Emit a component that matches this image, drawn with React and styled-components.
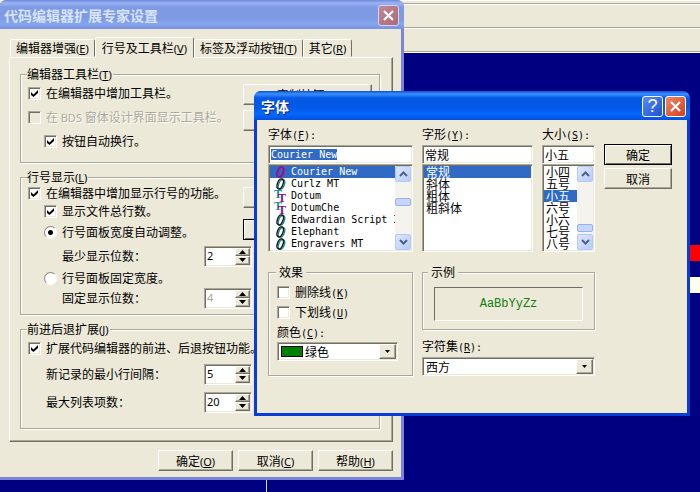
import React, { useEffect, useRef, useState } from "react";
import styled, { createGlobalStyle, css } from "styled-components";

const fonts = [
  { name: "Courier New", type: "O" },
  { name: "Curlz MT", type: "O" },
  { name: "Dotum", type: "T" },
  { name: "DotumChe", type: "T" },
  { name: "Edwardian Script I", type: "O" },
  { name: "Elephant", type: "O" },
  { name: "Engravers MT", type: "O" },
];
const styles = ["常规", "斜体", "粗体", "粗斜体"];
const sizes = ["小四", "五号", "小五", "六号", "小六", "七号", "八号"];
const tabs = [
  ["编辑器增强", "E"],
  ["行号及工具栏", "V"],
  ["标签及浮动按钮", "T"],
  ["其它", "R"],
];

// caption followed by its underlined access key
function Caption({ text, hot }) {
  return (
    <span>
      {text}
      <Latin>
        (<u>{hot}</u>)
      </Latin>
    </span>
  );
}

function MonoCaption({ text, hot, colon }) {
  return (
    <span>
      {text}
      <Mono>
        (<u>{hot}</u>){colon && ":"}
      </Mono>
    </span>
  );
}

function Check({ indent, disabled, checked, children }) {
  return (
    <CheckLabel $indent={indent} $disabled={disabled}>
      <CheckBox type="checkbox" defaultChecked={checked} disabled={disabled} />
      <span>{children}</span>
    </CheckLabel>
  );
}

function Spin({ id, label, value, indent, disabled }) {
  return (
    <>
      <SpinLabel htmlFor={id} $indent={indent}>
        {label}
      </SpinLabel>
      <SpinBox>
        <SpinInput id={id} defaultValue={value} disabled={disabled} />
        <SpinButtons>
          <SpinButton type="button" aria-label="增加">
            <svg width="7" height="4">
              <path d="M0 4L3.5 0L7 4Z" />
            </svg>
          </SpinButton>
          <SpinButton type="button" aria-label="减少">
            <svg width="7" height="4">
              <path d="M0 0L3.5 4L7 0Z" />
            </svg>
          </SpinButton>
        </SpinButtons>
      </SpinBox>
    </>
  );
}

function FontIcon({ type, active }) {
  const main = type === "T" || active ? "#84108c" : "#101818";
  return (
    <FontSvg width="13" height="12" viewBox="0 0 13 12" aria-hidden="true">
      {type === "T" ? (
        <g fontFamily="Liberation Serif" fontWeight="bold" fontSize="12">
          <text x="0" y="8" fill="#189090">
            T
          </text>
          <text x="4" y="12" fill={main}>
            T
          </text>
        </g>
      ) : (
        <g fill="none" transform="rotate(20 6.5 6)">
          <ellipse cx="7.6" cy="6" rx="2.8" ry="5.2" stroke={active ? "#a02890" : "#208888"} strokeWidth="1.3" />
          <ellipse cx="6.2" cy="6" rx="2.8" ry="5.2" stroke={main} strokeWidth="1.4" />
        </g>
      )}
    </FontSvg>
  );
}

function Scroll({ before, after }) {
  return (
    <ScrollTrack>
      <ScrollButton type="button" aria-label="向上">
        <svg width="9" height="6">
          <path d="M1 5L4.5 1.5L8 5" />
        </svg>
      </ScrollButton>
      <Spacer $grow={before} />
      <Thumb />
      <Spacer $grow={after} />
      <ScrollButton type="button" aria-label="向下">
        <svg width="9" height="6">
          <path d="M1 1L4.5 4.5L8 1" />
        </svg>
      </ScrollButton>
    </ScrollTrack>
  );
}

function Combo({ id, value, swatch }) {
  return (
    <ComboBox>
      {swatch && <Swatch />}
      <select id={id} defaultValue={value}>
        <option>{value}</option>
      </select>
      <ComboArrow aria-hidden="true">
        <svg width="5" height="3">
          <path d="M0 0H5L2.5 3Z" />
        </svg>
      </ComboArrow>
    </ComboBox>
  );
}

const Cross = () => (
  <svg width="13" height="13" viewBox="0 0 13 13">
    <path d="M2 2L11 11M11 2L2 11" stroke="#fff" strokeWidth="2.2" />
  </svg>
);

function OptionsDialog() {
  const [tab, setTab] = useState(1);

  return (
    <OptionsWindow>
      <TitleBar $inactive>
        <h1>代码编辑器扩展专家设置</h1>
        <TitleButton type="button" aria-label="关闭" $kind="faded">
          <Cross />
        </TitleButton>
      </TitleBar>
      <OptionsBody>
        <Tabs role="tablist">
          {tabs.map(([text, hot], i) => (
            <Tab key={hot} type="button" role="tab" aria-selected={i === tab} $active={i === tab} onClick={() => setTab(i)}>
              <Caption text={text} hot={hot} />
            </Tab>
          ))}
        </Tabs>
        <Panel>
          <Group $bottom={9}>
            <legend>
              <Caption text="编辑器工具栏" hot="T" />
            </legend>
            <Split>
              <div>
                <Row>
                  <Check checked>在编辑器中增加工具栏。</Check>
                </Row>
                <Row>
                  <Check disabled>
                    在 <Latin>BDS</Latin> 窗体设计界面显示工具栏。
                  </Check>
                </Row>
                <Row>
                  <Check checked indent={16}>
                    按钮自动换行。
                  </Check>
                </Row>
              </div>
              <SideButtons $gap={5}>
                <Button type="button">
                  <Caption text="定制按钮" hot="A" />
                </Button>
                <Button type="button" aria-label="按钮" />
              </SideButtons>
            </Split>
          </Group>
          <Group $bottom={6}>
            <legend>
              <Caption text="行号显示" hot="L" />
            </legend>
            <Split>
              <div>
                <Row $size="small">
                  <Check checked>在编辑器中增加显示行号的功能。</Check>
                </Row>
                <Row $size="small">
                  <Check checked indent={16}>
                    显示文件总行数。
                  </Check>
                </Row>
                <Row>
                  <CheckLabel $indent={16}>
                    <Radio type="radio" name="width" defaultChecked />
                    <span>行号面板宽度自动调整。</span>
                  </CheckLabel>
                </Row>
              </div>
              <SideButtons $gap={11}>
                <Button type="button" aria-label="字体" />
                <Button type="button" aria-label="颜色" $default />
              </SideButtons>
            </Split>
            <Row>
              <Spin id="min" label="最少显示位数：" value="2" indent={34} />
            </Row>
            <Row $size="medium">
              <CheckLabel $indent={16}>
                <Radio type="radio" name="width" />
                <span>行号面板固定宽度。</span>
              </CheckLabel>
            </Row>
            <Row $size="medium">
              <Spin id="fixed" label="固定显示位数：" value="4" indent={34} disabled />
            </Row>
          </Group>
          <Group $bottom={12}>
            <legend>
              <Caption text="前进后退扩展" hot="J" />
            </legend>
            <Row>
              <Check checked>扩展代码编辑器的前进、后退按钮功能。</Check>
            </Row>
            <Row $size="large">
              <Spin id="gap" label="新记录的最小行间隔：" value="5" indent={18} />
            </Row>
            <Row $size="large">
              <Spin id="max" label="最大列表项数：" value="20" indent={18} />
            </Row>
          </Group>
        </Panel>
        <Footer>
          <Button type="button">
            <Caption text="确定" hot="O" />
          </Button>
          <Button type="button">
            <Caption text="取消" hot="C" />
          </Button>
          <Button type="button">
            <Caption text="帮助" hot="H" />
          </Button>
        </Footer>
      </OptionsBody>
    </OptionsWindow>
  );
}

function FontDialog() {
  const nameRef = useRef(null);

  useEffect(() => {
    nameRef.current.focus();
    nameRef.current.select();
  }, []);

  return (
    <FontWindow>
      <TitleBar>
        <h1>字体</h1>
        <TitleButton type="button" aria-label="帮助" $kind="help">
          ?
        </TitleButton>
        <TitleButton type="button" aria-label="关闭" $kind="close">
          <Cross />
        </TitleButton>
      </TitleBar>
      <FontBody>
        <Column>
          <FieldLabel htmlFor="font">
            <MonoCaption text="字体" hot="F" colon />
          </FieldLabel>
          <TextBox id="font" ref={nameRef} defaultValue="Courier New" $mono />
          <ListBox>
            <ul role="listbox" aria-label="字体">
              {fonts.map((f, i) => (
                <Item key={f.name} role="option" aria-selected={i === 0} $active={i === 0} $icon>
                  <FontIcon type={f.type} active={i === 0} />
                  <Mono>{f.name}</Mono>
                </Item>
              ))}
            </ul>
            <Scroll before={16} after={28} />
          </ListBox>
        </Column>
        <Column>
          <FieldLabel htmlFor="style">
            <MonoCaption text="字形" hot="Y" colon />
          </FieldLabel>
          <TextBox id="style" defaultValue="常规" />
          <ListBox>
            <ul role="listbox" aria-label="字形">
              {styles.map((s, i) => (
                <Item key={s} role="option" aria-selected={i === 0} $active={i === 0}>
                  {s}
                </Item>
              ))}
            </ul>
          </ListBox>
        </Column>
        <Column>
          <FieldLabel htmlFor="size">
            <MonoCaption text="大小" hot="S" colon />
          </FieldLabel>
          <TextBox id="size" defaultValue="小五" />
          <ListBox>
            <ul role="listbox" aria-label="大小">
              {sizes.map((s, i) => (
                <Item key={s} role="option" aria-selected={i === 2} $active={i === 2}>
                  {s}
                </Item>
              ))}
            </ul>
            <Scroll before={38} after={2} />
          </ListBox>
        </Column>
        <Actions>
          <Button type="submit" $default>
            确定
          </Button>
          <Button type="button">取消</Button>
        </Actions>
        <Effects>
          <legend>效果</legend>
          <Row $size="medium">
            <Check>
              <MonoCaption text="删除线" hot="K" />
            </Check>
          </Row>
          <Row $size="medium">
            <Check>
              <MonoCaption text="下划线" hot="U" />
            </Check>
          </Row>
          <Row $size="medium">
            <label htmlFor="color">
              <MonoCaption text="颜色" hot="C" colon />
            </label>
          </Row>
          <Combo id="color" value="绿色" swatch />
        </Effects>
        <SampleColumn>
          <Sample>
            <legend>示例</legend>
            <SampleText>AaBbYyZz</SampleText>
          </Sample>
          <div>
            <FieldLabel htmlFor="charset">
              <MonoCaption text="字符集" hot="R" colon />
            </FieldLabel>
            <Combo id="charset" value="西方" />
          </div>
        </SampleColumn>
      </FontBody>
    </FontWindow>
  );
}

function App() {
  return (
    <Desktop>
      <GlobalStyle />
      <ToolStrip $height={4} />
      <ToolStrip $height={24} />
      <ToolStrip $height={24} />
      <Editor>
        <Gutter />
        <Code>
          <CodeLine $color="#ff0000" />
          <CodeLine $color="#fffff0" />
        </Code>
      </Editor>
      <OptionsDialog />
      <FontDialog />
    </Desktop>
  );
}

export default App;

const GlobalStyle = createGlobalStyle`
  * {
    box-sizing: border-box;
  }
  body {
    margin: 0;
    font: 12px/14px "Noto Sans CJK SC", sans-serif;
    color: #000;
  }
  button, input, select {
    font: inherit;
    color: inherit;
    margin: 0;
    padding: 0;
    border: 0;
    border-radius: 0;
    outline: none;
  }
  button {
    display: flex;
    align-items: center;
    justify-content: center;
    white-space: nowrap;
  }
  ul, h1 {
    margin: 0;
    padding: 0;
    list-style: none;
  }
  svg {
    display: block;
    flex: none;
  }
`;

const Latin = styled.span`
  font-family: "Noto Sans", sans-serif;
  font-size: 11px;
  line-height: 12px;
`;

const Mono = styled.span`
  font-family: "DejaVu Sans Mono", monospace;
  font-size: 10px;
  line-height: 12px;
`;

const FontSvg = styled.svg`
  overflow: visible;
`;

const sunken = css`
  border: 1px solid;
  border-color: #aca899 #fff #fff #aca899;
  box-shadow: inset 1px 1px 0 #716f64, inset -1px -1px 0 #ece9d8;
`;

const raised = css`
  background: #ece9d8;
  border: 1px solid;
  border-color: #fff #716f64 #716f64 #fff;
  box-shadow: inset -1px -1px 0 #aca899;
`;

const Desktop = styled.main`
  position: relative;
  display: flex;
  flex-direction: column;
  min-height: 100vh;
  overflow: hidden;
  background: #000080;
`;

const ToolStrip = styled.div`
  height: ${(props) => props.$height}px;
  background: #ece9d8;
  border-top: 1px solid #fff;
  border-bottom: 1px solid #aca899;
`;

const Editor = styled.div`
  flex: 1;
  display: flex;
  border-top: 1px solid #fff;
`;

const Gutter = styled.div`
  width: 267px;
  border-right: 1px solid #d8d8d8;
`;

const Code = styled.div`
  flex: 1;
  display: flex;
  flex-direction: column;
  gap: 16px;
  padding-top: 192px;
`;

const CodeLine = styled.div`
  height: 16px;
  background: ${(props) => props.$color};
`;

const OptionsWindow = styled.section`
  position: absolute;
  top: 0;
  left: 0;
  width: 404px;
  padding: 0 3px 3px 0;
  background: #7b84d6;
  border-radius: 6px 7px 0 0;
`;

const FontWindow = styled.form`
  position: absolute;
  top: 91px;
  left: 254px;
  width: 436px;
  padding: 0 3px 3px;
  background: #0a3cd8;
  border-radius: 7px 7px 0 0;
  overflow: hidden;
`;

const TitleBar = styled.header`
  display: flex;
  align-items: center;
  gap: 2px;
  height: 29px;
  margin: ${(props) => (props.$inactive ? "0 -3px 0 0" : "0 -3px")};
  padding: ${(props) => (props.$inactive ? "1px 5px 0 4px" : "1px 4px 0 7px")};
  border-radius: 6px 7px 0 0;
  color: ${(props) => (props.$inactive ? "#d8e4f8" : "#fff")};
  background: ${(props) =>
    props.$inactive
      ? "linear-gradient(#7088dc 0, #9ab4f4 3px, #7e9be4 7px, #7d9ae3 18px, #86a6ee 24px, #7b90e0 29px)"
      : "linear-gradient(#0a50d8 0, #3a90ff 3px, #0458e6 7px, #0458e6 16px, #0468fc 23px, #0450dc 29px)"};
  h1 {
    flex: 1;
    font-size: 14px;
    line-height: 20px;
    font-weight: bold;
    text-shadow: ${(props) => (props.$inactive ? "none" : "1px 1px 0 #0a2a80")};
  }
`;

const titleColors = {
  faded: "linear-gradient(135deg, #c08898, #b06878)",
  help: "linear-gradient(135deg, #5c8cf4, #1c50d0)",
  close: "linear-gradient(135deg, #f08868, #d04018)",
};

const TitleButton = styled.button`
  width: 21px;
  height: 21px;
  border: 1px solid ${(props) => (props.$kind === "faded" ? "#d0d8f8" : "#fff")};
  border-radius: 3px;
  background: ${(props) => titleColors[props.$kind]};
  color: #fff;
  font: 18px/18px "Liberation Sans", sans-serif;
`;

const OptionsBody = styled.div`
  padding: 8px 8px 6px 9px;
  background: #ece9d8;
`;

const Tabs = styled.div`
  display: flex;
  align-items: flex-end;
  height: 20px;
  padding-left: 1px;
`;

const Tab = styled.button`
  height: ${(props) => (props.$active ? 21 : 18)}px;
  padding: 0 ${(props) => (props.$active ? 6 : 5)}px;
  background: #ece9d8;
  border: 1px solid;
  border-color: #fff #716f64 transparent #fff;
  border-radius: 2px 2px 0 0;
  margin-bottom: ${(props) => (props.$active ? -1 : 0)}px;
`;

const Panel = styled.div`
  display: flex;
  flex-direction: column;
  gap: 7px;
  padding: 9px 12px 12px 10px;
  ${raised}
`;

const Group = styled.fieldset`
  min-width: 0;
  margin: 0;
  padding: 0 7px ${(props) => props.$bottom}px;
  border: 1px solid #aca899;
  box-shadow: 1px 1px 0 #fff, inset 1px 1px 0 #fff;
  legend {
    height: 14px;
    padding: 0 1px 0 0;
    margin-left: -1px;
    background: #ece9d8;
  }
`;

const Split = styled.div`
  display: flex;
  justify-content: space-between;
`;

const SideButtons = styled.div`
  display: flex;
  flex-direction: column;
  gap: ${(props) => props.$gap}px;
  width: 129px;
  padding-top: 3px;
`;

const rowHeights = { small: 18, medium: 20, large: 28 };

const Row = styled.div`
  display: flex;
  align-items: center;
  height: ${(props) => rowHeights[props.$size] || 24}px;
`;

const CheckLabel = styled.label`
  display: flex;
  align-items: center;
  gap: 5px;
  padding-left: ${(props) => props.$indent || 0}px;
  white-space: nowrap;
  color: ${(props) => (props.$disabled ? "#aca899" : "#000")};
  text-shadow: ${(props) => (props.$disabled ? "1px 1px 0 #fff" : "none")};
`;

const CheckBox = styled.input`
  appearance: none;
  flex: none;
  width: 13px;
  height: 13px;
  background: #fff;
  ${sunken}
  &:checked {
    background: #fff
      url("data:image/svg+xml,%3Csvg xmlns='http://www.w3.org/2000/svg' width='7' height='7'%3E%3Cpath d='M0 2L2.5 4.5L7 0V3L2.5 7L0 5Z'/%3E%3C/svg%3E")
      center no-repeat;
  }
  &:disabled {
    background-color: #ece9d8;
  }
`;

const Radio = styled.input`
  appearance: none;
  flex: none;
  width: 13px;
  height: 13px;
  border: 1px solid;
  border-color: #8c887c #fff #fff #8c887c;
  border-radius: 50%;
  background: #fff;
  &:checked {
    background: radial-gradient(circle, #000 2px, #fff 3px);
  }
`;

const SpinLabel = styled.label`
  width: 176px;
  padding-left: ${(props) => props.$indent}px;
`;

const SpinBox = styled.div`
  display: flex;
  width: 48px;
  height: 21px;
  padding: 1px;
  background: #fff;
  ${sunken}
`;

const SpinInput = styled.input`
  flex: 1;
  min-width: 0;
  padding-left: 1px;
  background: #fff;
  font: 11px/14px "Noto Sans", sans-serif;
  &:disabled {
    color: #aca899;
  }
`;

const SpinButtons = styled.div`
  display: flex;
  flex-direction: column;
  width: 15px;
`;

const SpinButton = styled.button`
  flex: 1;
  ${raised}
`;

const Button = styled.button`
  height: 21px;
  ${raised}
  ${(props) =>
    props.$default &&
    css`
      border-color: #000;
      box-shadow: inset 1px 1px 0 #fff, inset -1px -1px 0 #716f64;
    `}
`;

const Footer = styled.footer`
  display: flex;
  justify-content: flex-end;
  gap: 5px;
  margin-top: 8px;
  ${Button} {
    width: 75px;
  }
`;

const FontBody = styled.div`
  display: grid;
  grid-template-columns: 145px 111px 53px 68px;
  column-gap: 9px;
  row-gap: 13px;
  padding: 7px 11px 37px;
  background: #ece9d8;
`;

const Column = styled.div`
  min-width: 0;
`;

const FieldLabel = styled.label`
  display: block;
  height: 14px;
  margin-bottom: 4px;
  white-space: nowrap;
`;

const TextBox = styled.input`
  display: block;
  width: 100%;
  height: 19px;
  padding: 0 2px;
  background: #fff;
  ${sunken}
  ${(props) => props.$mono && `font: 10px/14px "DejaVu Sans Mono", monospace;`}
  &::selection {
    background: #316ac5;
    color: #fff;
  }
`;

const ListBox = styled.div`
  display: flex;
  height: 88px;
  padding: 1px;
  background: #fff;
  ${sunken}
  ul {
    flex: 1;
    min-width: 0;
    overflow: hidden;
  }
`;

const Item = styled.li`
  display: flex;
  align-items: center;
  gap: 4px;
  height: 12px;
  padding-left: ${(props) => (props.$icon ? 4 : 2)}px;
  line-height: 12px;
  white-space: nowrap;
  color: ${(props) => (props.$active ? "#fff" : "#000")};
  background: ${(props) => (props.$active ? "#316ac5" : "transparent")};
`;

const ScrollTrack = styled.div`
  display: flex;
  flex-direction: column;
  width: 16px;
  background: #f4f3ee;
`;

const ScrollButton = styled.button`
  height: 16px;
  border: 1px solid #b4c8f6;
  border-radius: 2px;
  background: linear-gradient(135deg, #dce6fe, #b8ccfa);
  path {
    fill: none;
    stroke: #4d6185;
    stroke-width: 2;
  }
`;

const Spacer = styled.div`
  flex: ${(props) => props.$grow};
`;

const Thumb = styled.div`
  height: 8px;
  border: 1px solid #98b0ee;
  border-radius: 2px;
  background: #c6d6fc;
`;

const Actions = styled.div`
  display: flex;
  flex-direction: column;
  gap: 3px;
  padding-top: 17px;
`;

const Effects = styled(Group)`
  padding: 3px 14px 11px 8px;
  legend {
    padding: 0 3px;
  }
`;

const SampleColumn = styled.div`
  grid-column: span 2;
  display: flex;
  flex-direction: column;
  gap: 9px;
`;

const Sample = styled(Group)`
  padding: 8px 11px;
  legend {
    margin-left: -6px;
    padding: 0 3px;
  }
`;

const SampleText = styled.div`
  display: flex;
  align-items: center;
  justify-content: center;
  height: 34px;
  border: 1px solid;
  border-color: #716f64 #fff #fff #716f64;
  color: #108010;
  font: 12px/14px "Liberation Mono", monospace;
`;

const ComboBox = styled.div`
  display: flex;
  align-items: center;
  height: 19px;
  padding: 1px;
  background: #fff;
  ${sunken}
  select {
    appearance: none;
    flex: 1;
    min-width: 0;
    padding-left: 2px;
    background: transparent;
  }
`;

const Swatch = styled.span`
  width: 22px;
  height: 11px;
  margin-left: 2px;
  border: 1px solid #000;
  background: #008000;
`;

const ComboArrow = styled.span`
  display: flex;
  align-items: center;
  justify-content: center;
  width: 17px;
  height: 15px;
  ${raised}
`;
